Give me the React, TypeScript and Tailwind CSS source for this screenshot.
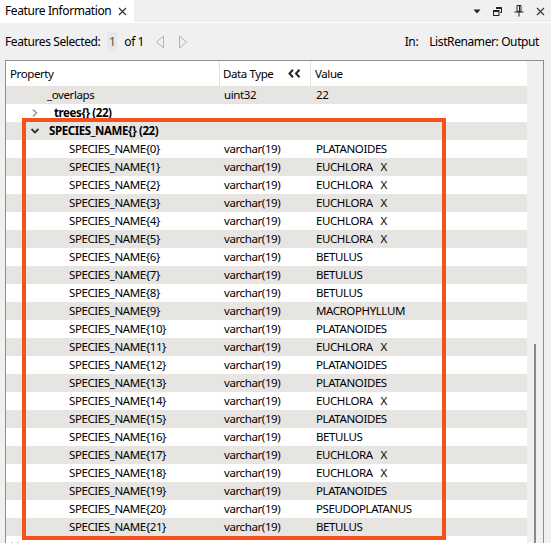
import React from "react";

type Row = { i: number; value: string };

const rows: Row[] = [
  { i: 0, value: "PLATANOIDES" },
  { i: 1, value: "EUCHLORA   X" },
  { i: 2, value: "EUCHLORA   X" },
  { i: 3, value: "EUCHLORA   X" },
  { i: 4, value: "EUCHLORA   X" },
  { i: 5, value: "EUCHLORA   X" },
  { i: 6, value: "BETULUS" },
  { i: 7, value: "BETULUS" },
  { i: 8, value: "BETULUS" },
  { i: 9, value: "MACROPHYLLUM" },
  { i: 10, value: "PLATANOIDES" },
  { i: 11, value: "EUCHLORA   X" },
  { i: 12, value: "PLATANOIDES" },
  { i: 13, value: "PLATANOIDES" },
  { i: 14, value: "EUCHLORA   X" },
  { i: 15, value: "PLATANOIDES" },
  { i: 16, value: "BETULUS" },
  { i: 17, value: "EUCHLORA   X" },
  { i: 18, value: "EUCHLORA   X" },
  { i: 19, value: "PLATANOIDES" },
  { i: 20, value: "PSEUDOPLATANUS" },
  { i: 21, value: "BETULUS" },
];

function ChevronRight() {
  return (
    <svg width="8" height="10" viewBox="0 0 8 10" className="shrink-0">
      <path d="M2 1.5 L5.5 5 L2 8.5" fill="none" stroke="#8a8a8a" strokeWidth="1.2" />
    </svg>
  );
}

function ChevronDown() {
  return (
    <svg width="10" height="8" viewBox="0 0 10 8" className="shrink-0">
      <path d="M1.5 2 L5 5.5 L8.5 2" fill="none" stroke="#333" strokeWidth="1.8" />
    </svg>
  );
}

function TableRow({
  shade,
  children,
  type,
  value,
}: {
  shade: boolean;
  children: React.ReactNode;
  type?: string;
  value?: string;
}) {
  return (
    <div className={`grid h-[18px] grid-cols-[214px_91px_1fr] items-center ${shade ? "bg-[#e7e5e2]" : "bg-white"}`}>
      <div className="flex items-center whitespace-nowrap">{children}</div>
      <div className="pl-[4px] whitespace-nowrap">{type}</div>
      <div className="pl-[5px] whitespace-pre">{value}</div>
    </div>
  );
}

export default function App() {
  return (
    <div className="flex h-[543px] w-[551px] flex-col overflow-hidden bg-[#f0f0f0] font-['Noto_Sans',sans-serif] text-[11.5px] tracking-[-0.4px] text-black">
      {/* title bar */}
      <div className="flex h-[22px] shrink-0 items-center">
        <div className="flex h-full w-[134px] items-center bg-white pl-[5px]">
          <span className="whitespace-nowrap text-[12px] leading-none">Feature Information</span>
          <svg width="9" height="9" viewBox="0 0 9 9" className="ml-[7px] shrink-0">
            <path d="M1 1 L8 8 M8 1 L1 8" stroke="#333" strokeWidth="1.2" />
          </svg>
        </div>
        <div className="flex-1" />
        <div className="flex items-center gap-[12px] pr-[6px] text-[#333]">
          <svg width="8" height="5" viewBox="0 0 8 5">
            <path d="M0.5 0.5 H7.5 L4 4.5 Z" fill="#222" />
          </svg>
          <svg width="9" height="9" viewBox="0 0 9 9">
            <path d="M3 0.5 H8.5 V5.5 H7" fill="none" stroke="#222" strokeWidth="1" />
            <path d="M3 1 H8.5" stroke="#222" strokeWidth="2" />
            <rect x="0.5" y="3.5" width="5.5" height="5" fill="none" stroke="#222" strokeWidth="1" />
            <path d="M0.5 4 H6" stroke="#222" strokeWidth="2" />
          </svg>
          <svg width="10" height="12" viewBox="0 0 10 12">
            <path d="M3 0.5 H7 V6.5 H3 Z" fill="none" stroke="#222" strokeWidth="1" />
            <path d="M5.5 1 V6.5" stroke="#222" strokeWidth="1" />
            <path d="M0.5 7 H9.5" stroke="#222" strokeWidth="1" />
            <path d="M5 7 V11.5" stroke="#222" strokeWidth="1" />
          </svg>
          <svg width="9" height="9" viewBox="0 0 9 9">
            <path d="M1 1 L8 8 M8 1 L1 8" stroke="#333" strokeWidth="1.1" />
          </svg>
        </div>
      </div>
      <div className="h-px shrink-0 bg-white" />

      {/* toolbar */}
      <div className="flex h-[37px] shrink-0 items-center pl-[5px] pr-[12px] text-[12px]">
        <span>Features Selected:</span>
        <span className="ml-[7px] flex h-[19px] w-[10px] items-center justify-center bg-[#e8e8e8] text-[#555]">1</span>
        <span className="ml-[7px]">of 1</span>
        <svg width="10" height="14" viewBox="0 0 10 14" className="ml-[11px]">
          <path d="M8.5 1 L1.5 7 L8.5 13 Z" fill="none" stroke="#b4b4b4" strokeWidth="1" />
        </svg>
        <svg width="10" height="14" viewBox="0 0 10 14" className="ml-[13px]">
          <path d="M1.5 1 L8.5 7 L1.5 13 Z" fill="none" stroke="#b4b4b4" strokeWidth="1" />
        </svg>
        <div className="flex-1" />
        <span>In:</span>
        <span className="ml-[11px]">ListRenamer: Output</span>
      </div>

      {/* table */}
      <div className="ml-[5px] mr-[7px] flex min-h-0 flex-1 border-l border-r border-t border-[#8e8e98]">
        <div className="relative flex w-[521px] flex-col">
          <div className="grid h-[25px] shrink-0 grid-cols-[214px_91px_1fr] bg-white">
            <div className="flex items-center border-r border-[#e2e2e2] pl-[4px]">Property</div>
            <div className="flex items-center justify-between border-r border-[#e2e2e2] pl-[3px] pr-[9px]">
              <span>Data Type</span>
              <svg width="13" height="9" viewBox="0 0 13 9">
                <path d="M5 0.8 L1.5 4.5 L5 8.2 M11.5 0.8 L8 4.5 L11.5 8.2" fill="none" stroke="#222" strokeWidth="2" />
              </svg>
            </div>
            <div className="flex items-center pl-[4px]">Value</div>
          </div>

          <div className="relative min-h-0 flex-1 overflow-hidden">
            <TableRow shade type="uint32" value="22">
              <span className="pl-[41px]">_overlaps</span>
            </TableRow>
            <TableRow shade={false}>
              <span className="ml-[25px]">
                <ChevronRight />
              </span>
              <span className="ml-[15px] font-bold">trees{"{}"} (22)</span>
            </TableRow>
            <TableRow shade>
              <span className="ml-[24px]">
                <ChevronDown />
              </span>
              <span className="ml-[9px] font-bold">SPECIES_NAME{"{}"} (22)</span>
            </TableRow>
            {rows.map((r) => (
              <TableRow key={r.i} shade={r.i % 2 === 1} type="varchar(19)" value={r.value}>
                <span className="pl-[63px]">SPECIES_NAME{`{${r.i}}`}</span>
              </TableRow>
            ))}
            <TableRow shade={false}>
              <span className="ml-[4px]">
                <ChevronDown />
              </span>
            </TableRow>

            {/* highlight */}
            <div className="pointer-events-none absolute left-[16px] top-[32px] h-[422px] w-[424px] border-[4px] border-[#f4511e]" />
          </div>
        </div>
        <div className="relative w-[16px] bg-[#f0f0f0]">
          <div className="absolute left-[7px] top-[283px] h-[300px] w-[2px] bg-[#888]" />
        </div>
      </div>
    </div>
  );
}
